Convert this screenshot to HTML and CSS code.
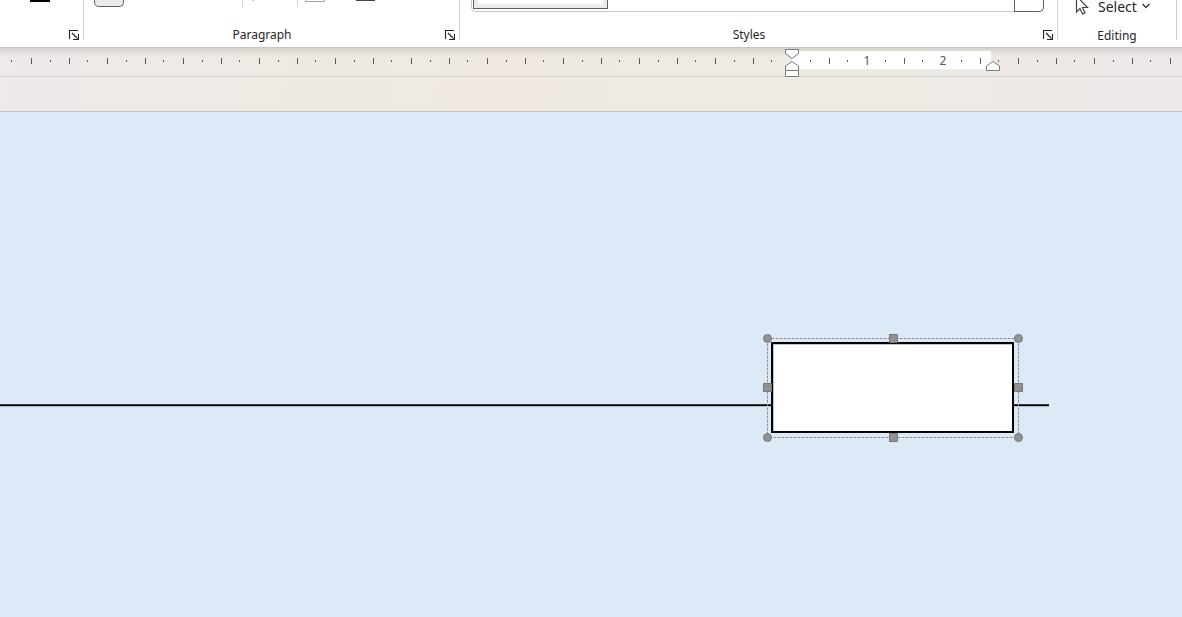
FILE: index.html
```html
<!DOCTYPE html>
<html lang="en">
<head>
<meta charset="utf-8">
<title>Document editor</title>
<link rel="stylesheet" href="styles.css">
</head>
<body>
<svg class="defs" aria-hidden="true">
  <symbol id="launcher" viewBox="0 0 10 10">
    <path d="M.5 9V.5H9M3 3l5.500 5.500M9.500 4v5.500H4" fill="none" stroke="#222" stroke-width="1.200"/>
  </symbol>
</svg>
<header class="ribbon">
  <section class="group">
    <div class="tools font-tools"><span class="swatch"></span></div>
    <footer class="caption"><span></span><button class="launch" aria-label="Font settings"><svg><use href="#launcher"/></svg></button></footer>
  </section>
  <section class="group">
    <div class="tools para-tools">
      <button class="align" aria-label="Align"></button>
      <span class="sep"></span>
      <svg class="para-icons" viewBox="0 0 54 7"><path d="M9 0h2v1H9z" fill="#a5cde6"/></svg>
      <span class="sep"></span>
      <svg class="border-icons" viewBox="0 0 90 7"><path d="M7.500 0v1.500h19V0" fill="none" stroke="#a5a5a5"/><path d="M58 0h19v1H58z" fill="#444"/></svg>
    </div>
    <footer class="caption"><span>Paragraph</span><button class="launch" aria-label="Paragraph settings"><svg><use href="#launcher"/></svg></button></footer>
  </section>
  <section class="group">
    <div class="tools style-tools">
      <div class="gallery"><button class="style-item" aria-label="Style"></button><button class="more" aria-label="More styles"></button></div>
    </div>
    <footer class="caption"><span>Styles</span><button class="launch" aria-label="Style settings"><svg><use href="#launcher"/></svg></button></footer>
  </section>
  <section class="group">
    <div class="tools edit-tools">
      <button class="select">
        <svg class="cursor" viewBox="0 0 14 18"><path d="M1.500-2v16l3.500-3.500 2.500 5.500 2.500-1-2.500-5.500H12.500L1.500-2z" fill="#fff" stroke="#444" stroke-width="1.200"/></svg>
        <span>Select</span>
        <svg class="chevron" viewBox="0 0 8 8"><path d="M.5 1L4 4.500 7.500 1" fill="none" stroke="#333" stroke-width="1.300"/></svg>
      </button>
    </div>
    <footer class="caption plain"><span>Editing</span></footer>
  </section>
</header>
<div class="ruler">
  <svg class="ruler-scale" aria-label="Horizontal ruler">
    <defs>
      <pattern id="left-ticks" width="76" height="30" patternUnits="userSpaceOnUse">
        <path d="M31 10h1v6h-1zM69 10h1v6h-1zM11 12h1v2h-1zM50 12h1v2h-1z" fill="#5c5a59"/>
      </pattern>
      <pattern id="right-ticks" x="980" width="76" height="30" patternUnits="userSpaceOnUse">
        <path d="M0 10h1v6H0zM38 10h1v6h-1zM18 12h1v2h-1zM57 12h1v2h-1z" fill="#5c5a59"/>
      </pattern>
    </defs>
    <rect width="785" height="28" fill="url(#left-ticks)"/>
    <path d="M792 3h199v18H792z" fill="#fff"/>
    <rect x="980" width="100%" height="28" fill="url(#right-ticks)"/>
    <path d="M829 10h1v6h-1zM904 10h1v6h-1zM810 12h1v2h-1zM847 12h1v2h-1zM885 12h1v2h-1zM922 12h1v2h-1zM961 12h1v2h-1z" fill="#5c5a59"/>
    <text x="867" y="17">1</text>
    <text x="943" y="17">2</text>
    <g fill="#fff" stroke="#7a7a7a">
      <path d="M785.500 1.500h13v4l-6.500 5-6.500-5z"/>
      <path d="M785.500 28.500V18l6.500-4.500 6.500 4.500v10.500zM785.500 22.500h13"/>
      <path d="M986.500 22.500V18l6.500-4.500 6.500 4.500v4.500z"/>
    </g>
  </svg>
</div>
<div class="margin-band"></div>
<main class="page">
  <svg class="drawing" aria-label="Drawing canvas">
    <path d="M0 292h1049v1H0z" fill="#3a3d40"/>
    <path d="M0 293h1049v1H0z"/>
    <path d="M0 294h1049v1H0z" fill="#b4bec8"/>
    <rect x="772" y="231" width="241" height="89" fill="#fff" stroke="#000" stroke-width="2"/>
    <path d="M773.500 319v-86.500H1012" fill="none" stroke="#c4c4c4"/>
    <rect x="767.500" y="226.500" width="251" height="99" fill="none" stroke="#fff"/>
    <rect x="767.500" y="226.500" width="251" height="99" fill="none" stroke="#8c8c8c" stroke-dasharray="3 1"/>
    <g fill="#929292" stroke="#777">
      <circle cx="767.500" cy="226.500" r="4"/><circle cx="1018.500" cy="226.500" r="4"/>
      <circle cx="767.500" cy="325.500" r="4"/><circle cx="1018.500" cy="325.500" r="4"/>
      <path d="M889.500 222.500h8v8h-8zM889.500 321.500h8v8h-8zM763.500 271.500h8v8h-8zM1014.500 271.500h8v8h-8z"/>
    </g>
  </svg>
</main>
</body>
</html>
```
FILE: styles.css
```css
* { box-sizing: border-box; }
body {
  margin: 0;
  min-height: 100vh;
  display: flex;
  flex-direction: column;
  overflow: hidden;
  font-family: "Noto Sans", sans-serif;
  font-size: 12px;
  color: #262626;
  background: linear-gradient(100deg, #eee9ea, #eeeae6 15%, #eeeae2 28%, #f0e9e3 42%, #eeeae4 55%, #eeeae4 72%, #eee9e7 84%, #ece8ea);
}
button { margin: 0; padding: 0; border: 0; background: none; font: inherit; color: inherit; }
svg { display: block; }
.defs { position: absolute; width: 0; height: 0; }

.ribbon {
  display: grid;
  grid-template-columns: 84px 376px 1fr 119px 5px;
  padding-bottom: 7px;
  background: #fff;
  border-bottom: 1px solid #c8c5c4;
}
.group { display: flex; flex-direction: column; border-right: 1px solid #d1d1d1; }
.tools { display: flex; height: 23px; align-items: flex-start; }
.font-tools { padding-left: 30px; }
.swatch { width: 20px; height: 2px; background: #000; }
.para-tools { padding-left: 10px; }
.align {
  width: 30px;
  height: 7px;
  margin-right: 118px;
  background: #ebebeb;
  border: 1px solid #616161;
  border-top: 0;
  border-radius: 0 0 5px 5px;
}
.sep { width: 1px; height: 7px; background: #d1d1d1; }
.para-icons { width: 54px; height: 7px; }
.border-icons { width: 90px; height: 7px; }
.style-tools { padding: 0 13px 0 11px; }
.gallery {
  flex: 1;
  display: flex;
  justify-content: space-between;
  height: 12px;
  padding-left: 1px;
  border: 1px solid #c8c8c8;
  border-width: 0 0 1px 1px;
  border-radius: 0 0 5px 5px;
}
.style-item { width: 135px; height: 9px; background: #fff; border: 1px solid #616161; border-top: 0; box-shadow: inset 4px 0 #ebebeb, inset -4px 0 #ebebeb, inset 0 -4px #ebebeb; }
.more { width: 30px; height: 12px; background: #fff; border: 1px solid #616161; border-top: 0; border-radius: 0 0 5px 0; }
.edit-tools { padding-left: 17px; }
.select { display: flex; align-items: center; height: 13px; font-size: 14px; line-height: 13px; }
.cursor { width: 14px; height: 18px; margin-right: 9px; }
.chevron { width: 8px; height: 8px; margin-left: 5px; }
.caption {
  display: grid;
  grid-template-columns: 1fr 10px;
  align-items: center;
  gap: 5px;
  height: 17px;
  padding: 4px 4px 1px 0;
  line-height: 16px;
  text-align: center;
}
.caption span { height: 16px; }
.plain { display: block; padding: 5px 0 0; }
.launch svg { width: 10px; height: 10px; }

.ruler { height: 29px; border-bottom: 1px solid #d4d3d4; background: linear-gradient(rgba(0, 0, 0, .1), transparent 8px); }
.ruler-scale { width: 100%; height: 29px; overflow: visible; }
.ruler-scale text { font-size: 12px; text-anchor: middle; fill: #555; }
.margin-band { height: 35px; border-bottom: 1px solid #c6c5c6; }
.page { flex: 1; display: grid; background: #dce9f6; }
.drawing { width: 100%; height: 100%; min-height: 400px; }
```
